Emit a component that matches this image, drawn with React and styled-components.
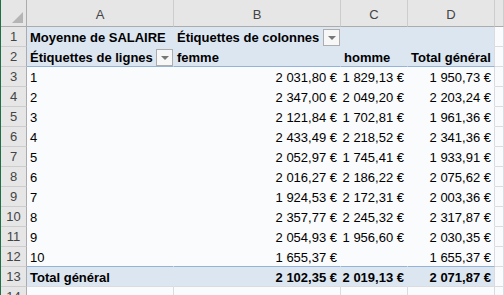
import { Fragment } from "react";
import styled, { createGlobalStyle } from "styled-components";

const GlobalStyle = createGlobalStyle`
  html, body {
    margin: 0;
    padding: 0;
    overflow: hidden;
    background: #fafbfc;
  }
`;

const GRID = "#dadcdf";
const PIVOT_FILL = "#dce6f1";
const PIVOT_LINE = "#95b3d7";
const PLAIN_FILL = "#fafbfc";

const Frame = styled.div`
  height: 295px;
  width: 504px;
  overflow: hidden;
  border-left: 1px solid #1e7145;
  box-sizing: border-box;
  font-family: "Liberation Sans", Arial, sans-serif;
  font-size: 13px;
  color: #000;
`;

const Sheet = styled.div`
  display: grid;
  grid-template-columns: 26px 147px 167px 67px 87px 1fr;
  grid-template-rows: 27px;
  grid-auto-rows: 20px;
`;

const Corner = styled.div`
  background: #e6e6e6;
  border-right: 1px solid #acacac;
  border-bottom: 1px solid #acacac;
  box-sizing: border-box;
  display: flex;
  align-items: flex-end;
  justify-content: flex-end;
  padding: 0 3px 3px 0;

  svg {
    display: block;
  }
`;

const ColHead = styled.div`
  background: #e6e6e6;
  border-right: 1px solid #cdcdcd;
  border-bottom: 1px solid #acacac;
  box-sizing: border-box;
  display: flex;
  align-items: center;
  justify-content: center;
  color: #444;
  padding-top: 2px;
`;

const RowHead = styled.div`
  background: #e6e6e6;
  border-right: 1px solid #acacac;
  border-bottom: 1px solid #cdcdcd;
  box-sizing: border-box;
  display: flex;
  align-items: center;
  justify-content: center;
  color: #444;
`;

const Cell = styled.div`
  background: ${(p) => p.$fill};
  border-right: 1px solid ${(p) => p.$lineR};
  border-bottom: 1px solid ${(p) => p.$lineB};
  box-sizing: border-box;
  display: flex;
  align-items: center;
  justify-content: ${(p) => (p.$align === "right" ? "flex-end" : "space-between")};
  padding: 1px ${(p) => (p.$drop ? "0" : "3px")} 0 3px;
  font-weight: ${(p) => (p.$bold ? 700 : 400)};
  white-space: nowrap;
`;

const DropButton = styled.span`
  width: 17px;
  height: 17px;
  box-sizing: border-box;
  border: 1px solid #adadad;
  background: #f7f7f7;
  display: flex;
  align-items: center;
  justify-content: center;
  align-self: flex-end;
  flex-shrink: 0;

  &::after {
    content: "";
    border-left: 4px solid transparent;
    border-right: 4px solid transparent;
    border-top: 4px solid #767676;
    margin-top: 1px;
  }
`;

const nb = (v) => v.replace(/ /g, "\u00a0");

const values = [
  ["1", "2 031,80 €", "1 829,13 €", "1 950,73 €"],
  ["2", "2 347,00 €", "2 049,20 €", "2 203,24 €"],
  ["3", "2 121,84 €", "1 702,81 €", "1 961,36 €"],
  ["4", "2 433,49 €", "2 218,52 €", "2 341,36 €"],
  ["5", "2 052,97 €", "1 745,41 €", "1 933,91 €"],
  ["6", "2 016,27 €", "2 186,22 €", "2 075,62 €"],
  ["7", "1 924,53 €", "2 172,31 €", "2 003,36 €"],
  ["8", "2 357,77 €", "2 245,32 €", "2 317,87 €"],
  ["9", "2 054,93 €", "1 956,60 €", "2 030,35 €"],
  ["10", "1 655,37 €", "", "1 655,37 €"],
].map((r) => r.map(nb));

const total = ["Total général", "2 102,35 €", "2 019,13 €", "2 071,87 €"].map((v, i) =>
  i ? nb(v) : v
);

function cellContent(r, c) {
  if (c > 3) return { text: "" };
  if (r === 1) {
    if (c === 0) return { text: "Moyenne de SALAIRE", bold: true };
    if (c === 1) return { text: "Étiquettes de colonnes", bold: true, drop: true };
    return { text: "" };
  }
  if (r === 2) {
    const t = ["Étiquettes de lignes", "femme", "homme", "Total général"];
    return { text: t[c], bold: true, drop: c === 0 };
  }
  if (r >= 3 && r <= 12) {
    return { text: values[r - 3][c], align: c ? "right" : "left" };
  }
  if (r === 13) {
    return { text: total[c], bold: true, align: c ? "right" : "left" };
  }
  return { text: "" };
}

function cellLook(r, c) {
  const pivot = r <= 13 && c <= 3;
  if (!pivot) return { fill: PLAIN_FILL, lineR: GRID, lineB: GRID };
  const fill = r <= 2 || r === 13 ? PIVOT_FILL : PLAIN_FILL;
  const lineR = c === 3 ? GRID : fill;
  let lineB = fill;
  if (r === 2 || r === 12) lineB = PIVOT_LINE;
  if (r === 13) lineB = GRID;
  return { fill, lineR, lineB };
}

const cols = ["A", "B", "C", "D", ""];
const rows = Array.from({ length: 14 }, (_, i) => i + 1);

function App() {
  return (
    <Frame>
      <GlobalStyle />
      <Sheet>
        <Corner>
          <svg width="11" height="11" viewBox="0 0 11 11">
            <polygon points="11,0 11,11 0,11" fill="#b5b5b5" />
          </svg>
        </Corner>
        {cols.map((l, i) => (
          <ColHead key={i}>{l}</ColHead>
        ))}
        {rows.map((r) => (
          <Fragment key={r}>
            <RowHead>{r}</RowHead>
            {cols.map((_, c) => {
              const cnt = cellContent(r, c);
              const look = cellLook(r, c);
              return (
                <Cell
                  key={c}
                  $fill={look.fill}
                  $lineR={look.lineR}
                  $lineB={look.lineB}
                  $bold={cnt.bold}
                  $align={cnt.align}
                  $drop={cnt.drop}
                >
                  <span>{cnt.text}</span>
                  {cnt.drop && <DropButton />}
                </Cell>
              );
            })}
          </Fragment>
        ))}
      </Sheet>
    </Frame>
  );
}

export default App;
